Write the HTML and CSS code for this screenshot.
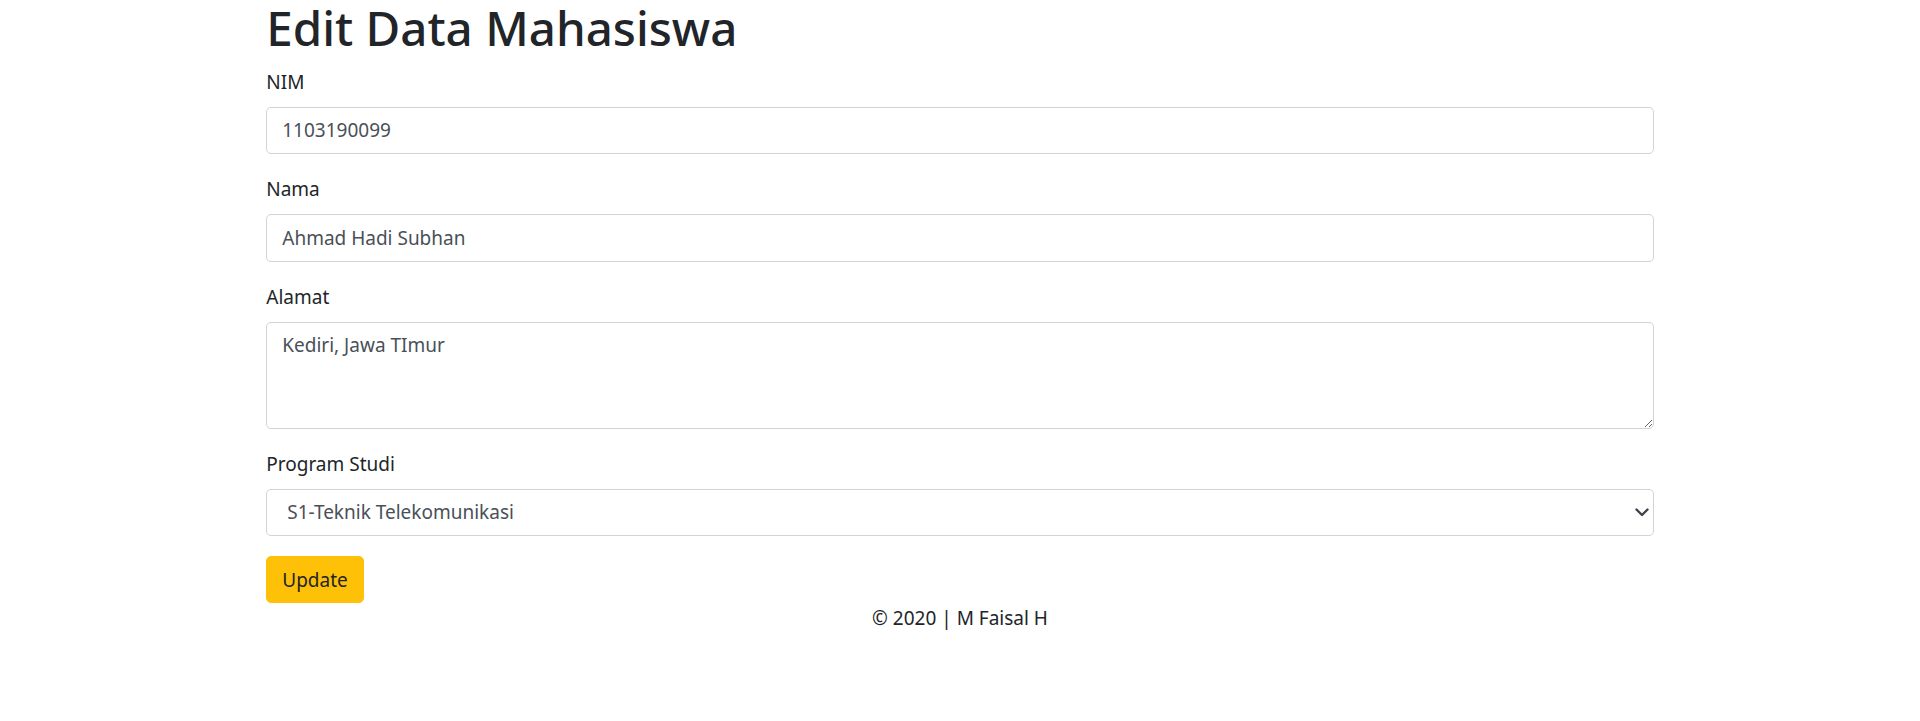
FILE: index.html
```html
<!DOCTYPE html>
<html lang="id">
<head>
<meta charset="utf-8">
<title>Edit Data Mahasiswa</title>
<link rel="stylesheet" href="styles.css">
</head>
<body>
<div class="container">
  <h1 class="title">Edit Data Mahasiswa</h1>
  <form class="form">
    <div class="form-group">
      <label class="label" for="nim">NIM</label>
      <input class="form-control" id="nim" type="text" value="1103190099">
    </div>
    <div class="form-group">
      <label class="label" for="nama">Nama</label>
      <input class="form-control" id="nama" type="text" value="Ahmad Hadi Subhan">
    </div>
    <div class="form-group">
      <label class="label" for="alamat">Alamat</label>
      <textarea class="form-control textarea" id="alamat" rows="3">Kediri, Jawa TImur</textarea>
    </div>
    <div class="form-group">
      <label class="label" for="prodi">Program Studi</label>
      <div class="select-wrap">
        <select class="form-control select" id="prodi">
          <option>S1-Teknik Telekomunikasi</option>
        </select>
        <svg class="chevron" width="14" height="9" viewBox="0 0 14 9"><path d="M1.5 1.5 L7 7 L12.5 1.5" fill="none" stroke="#3d434a" stroke-width="2.4" stroke-linecap="round" stroke-linejoin="round"/></svg>
      </div>
    </div>
    <button class="btn-warning" type="button">Update</button>
  </form>
  <footer class="footer">© 2020 | M Faisal H</footer>
</div>
</body>
</html>
```

FILE: styles.css
```css
html, body {
  margin: 0;
  padding: 0;
  background: #fff;
}
body {
  font-family: "Noto Sans", "Open Sans", sans-serif;
  font-size: 19px;
  line-height: 30px;
  color: #212529;
}
.container {
  width: 1425px;
  box-sizing: border-box;
  margin: 0 auto;
  padding: 0 18.75px;
}
.title {
  font-size: 47.5px;
  font-weight: 500;
  line-height: 56px;
  margin: 0 0 10.5px;
}
.form {
  margin: 0;
}
.form-group {
  margin-bottom: 20px;
}
.label {
  display: inline-block;
  margin-bottom: 10px;
}
.form-control {
  display: block;
  width: 100%;
  box-sizing: border-box;
  height: 47.5px;
  padding: 7.5px 15px;
  font-family: inherit;
  font-size: 19px;
  line-height: 30px;
  color: #495057;
  background: #fff;
  border: 1.25px solid #ced4da;
  border-radius: 5px;
  margin: 0;
}
.textarea {
  height: 107px;
  resize: vertical;
}
.select-wrap {
  position: relative;
}
.select {
  appearance: none;
  -webkit-appearance: none;
  padding-left: 20px;
}
.chevron {
  position: absolute;
  right: 5px;
  top: 19px;
}
.btn-warning {
  display: inline-block;
  font-family: inherit;
  font-size: 19px;
  line-height: 30px;
  padding: 7.5px 15px;
  color: #212529;
  background: #ffc107;
  border: 1.25px solid #ffc107;
  border-radius: 5px;
  margin: 0;
}
.footer {
  text-align: center;
}
```
